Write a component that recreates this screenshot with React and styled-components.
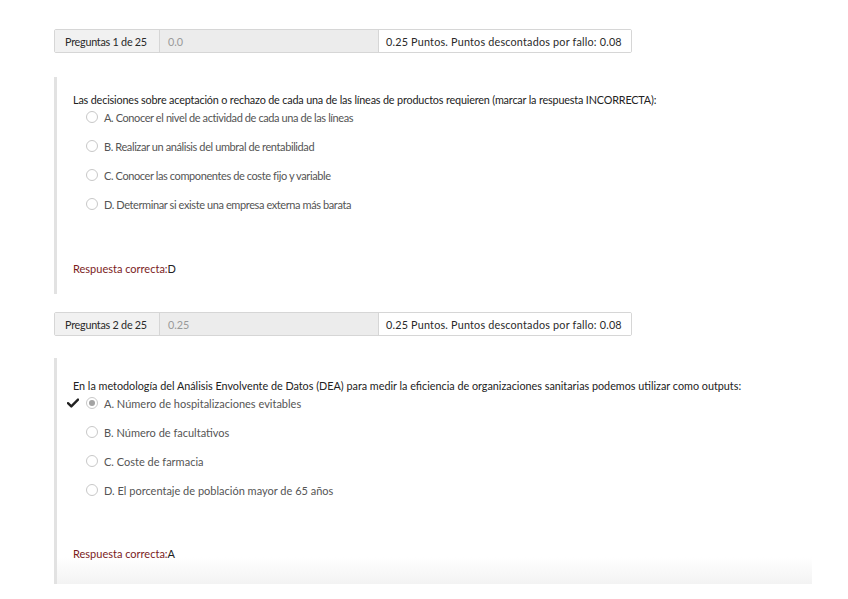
import React from "react";
import styled, { createGlobalStyle } from "styled-components";

const Global = createGlobalStyle`
  html, body { margin: 0; padding: 0; background: #fff; }
  body { font-family: Lato, "Open Sans", Arial, sans-serif; }
`;

const Page = styled.div`
  padding: 29px 36px 0 54px;
  display: flex;
  flex-direction: column;
`;

const InfoBar = styled.div`
  display: flex;
  width: 578px;
  height: 24px;
  box-sizing: border-box;
  border: 1px solid #d6d6d6;
  border-radius: 2px;
  font-size: 10.8px;
  color: #333;
  overflow: hidden;
  white-space: nowrap;
`;

const Cell = styled.div`
  display: flex;
  align-items: center;
  box-sizing: border-box;
  padding: 0 8px 0 ${(p) => p.$pl || 8}px;
  width: ${(p) => p.$w};
  flex: ${(p) => (p.$grow ? 1 : "none")};
  background: ${(p) => p.$bg};
  color: ${(p) => p.$color || "#2a2a2a"};
  letter-spacing: ${(p) => p.$ls || 0}px;
  border-right: ${(p) => (p.$sep ? "1px solid #d6d6d6" : "none")};
`;

const Box = styled.div`
  margin-top: ${(p) => p.$top}px;
  margin-bottom: 18px;
  width: 758px;
  height: ${(p) => p.$h}px;
  box-sizing: border-box;
  border-left: 3px solid #e2e2e2;
  padding: ${(p) => p.$pt}px 0 0 16px;
  display: flex;
  flex-direction: column;
  background: ${(p) => p.$fade
    ? "linear-gradient(to bottom, #fff 0%, #fff 88%, #f3f3f3 100%)"
    : "#fff"};
`;

const Question = styled.div`
  font-size: 10.8px;
  letter-spacing: ${(p) => p.$ls}px;
  line-height: 16px;
  color: #222;
  white-space: nowrap;
`;

const Options = styled.div`
  display: flex;
  flex-direction: column;
  gap: 13px;
  margin-top: 1px;
`;

const Option = styled.div`
  display: flex;
  align-items: center;
  height: 16px;
  font-size: 11px;
  letter-spacing: ${(p) => p.$ls}px;
  color: #555;
  white-space: nowrap;
`;

const CheckSlot = styled.span`
  width: 19px;
  margin-left: -6px;
  display: inline-flex;
  align-items: center;
`;

const Radio = styled.span`
  width: 10px;
  height: 10px;
  border-radius: 50%;
  border: 1px solid #c8c8c8;
  background: #fff;
  margin-right: 6px;
  display: inline-flex;
  align-items: center;
  justify-content: center;
  &::after {
    content: "";
    width: 6px;
    height: 6px;
    border-radius: 50%;
    background: ${(p) => (p.$checked ? "#a3a3a3" : "transparent")};
  }
`;

const Answer = styled.div`
  margin-top: auto;
  margin-bottom: ${(p) => p.$mb}px;
  font-size: 11px;
  color: #7b1c1c;
  span { color: #222; }
`;

const Check = () => (
  <svg width="12" height="10" viewBox="0 0 12 10">
    <path d="M1 5.2 L4.3 8.4 L11 1.6" fill="none" stroke="#222" strokeWidth="2.4" strokeLinecap="round" strokeLinejoin="round" />
  </svg>
);

const questions = [
  {
    n: 1,
    score: "0.0",
    text: "Las decisiones sobre aceptación o rechazo de cada una de las líneas de productos requieren (marcar la respuesta INCORRECTA):",
    options: [
      "A. Conocer el nivel de actividad de cada una de las líneas",
      "B. Realizar un análisis del umbral de rentabilidad",
      "C. Conocer las componentes de coste fijo y variable",
      "D. Determinar si existe una empresa externa más barata",
    ],
    checked: -1,
    answer: "D",
    top: 24,
    pt: 15,
    h: 217,
    mb: 19,
    qls: -0.16,
    ols: -0.4,
    fade: false,
  },
  {
    n: 2,
    score: "0.25",
    text: "En la metodología del Análisis Envolvente de Datos (DEA) para medir la eficiencia de organizaciones sanitarias podemos utilizar como outputs:",
    options: [
      "A. Número de hospitalizaciones evitables",
      "B. Número de facultativos",
      "C. Coste de farmacia",
      "D. El porcentaje de población mayor de 65 años",
    ],
    checked: 0,
    answer: "A",
    top: 22,
    pt: 20,
    h: 226,
    mb: 24,
    qls: 0,
    ols: 0,
    fade: true,
  },
];

export default function App() {
  return (
    <>
      <Global />
      <Page>
        {questions.map((q) => (
          <React.Fragment key={q.n}>
            <InfoBar>
              <Cell $w="105px" $pl={10} $ls={-0.25} $bg="#f1f1f1" $sep>Preguntas {q.n} de 25</Cell>
              <Cell $grow $bg="#ececec" $color="#999" $sep>{q.score}</Cell>
              <Cell $w="252px" $pl={7} $ls={0.2} $bg="#fff">0.25 Puntos. Puntos descontados por fallo: 0.08</Cell>
            </InfoBar>
            <Box $top={q.top} $pt={q.pt} $h={q.h} $fade={q.fade}>
              <Question $ls={q.qls}>{q.text}</Question>
              <Options>
                {q.options.map((o, i) => (
                  <Option key={i} $ls={q.ols}>
                    <CheckSlot>{q.checked === i ? <Check /> : null}</CheckSlot>
                    <Radio $checked={q.checked === i} />
                    {o}
                  </Option>
                ))}
              </Options>
              <Answer $mb={q.mb}>
                Respuesta correcta:<span>{q.answer}</span>
              </Answer>
            </Box>
          </React.Fragment>
        ))}
      </Page>
    </>
  );
}
